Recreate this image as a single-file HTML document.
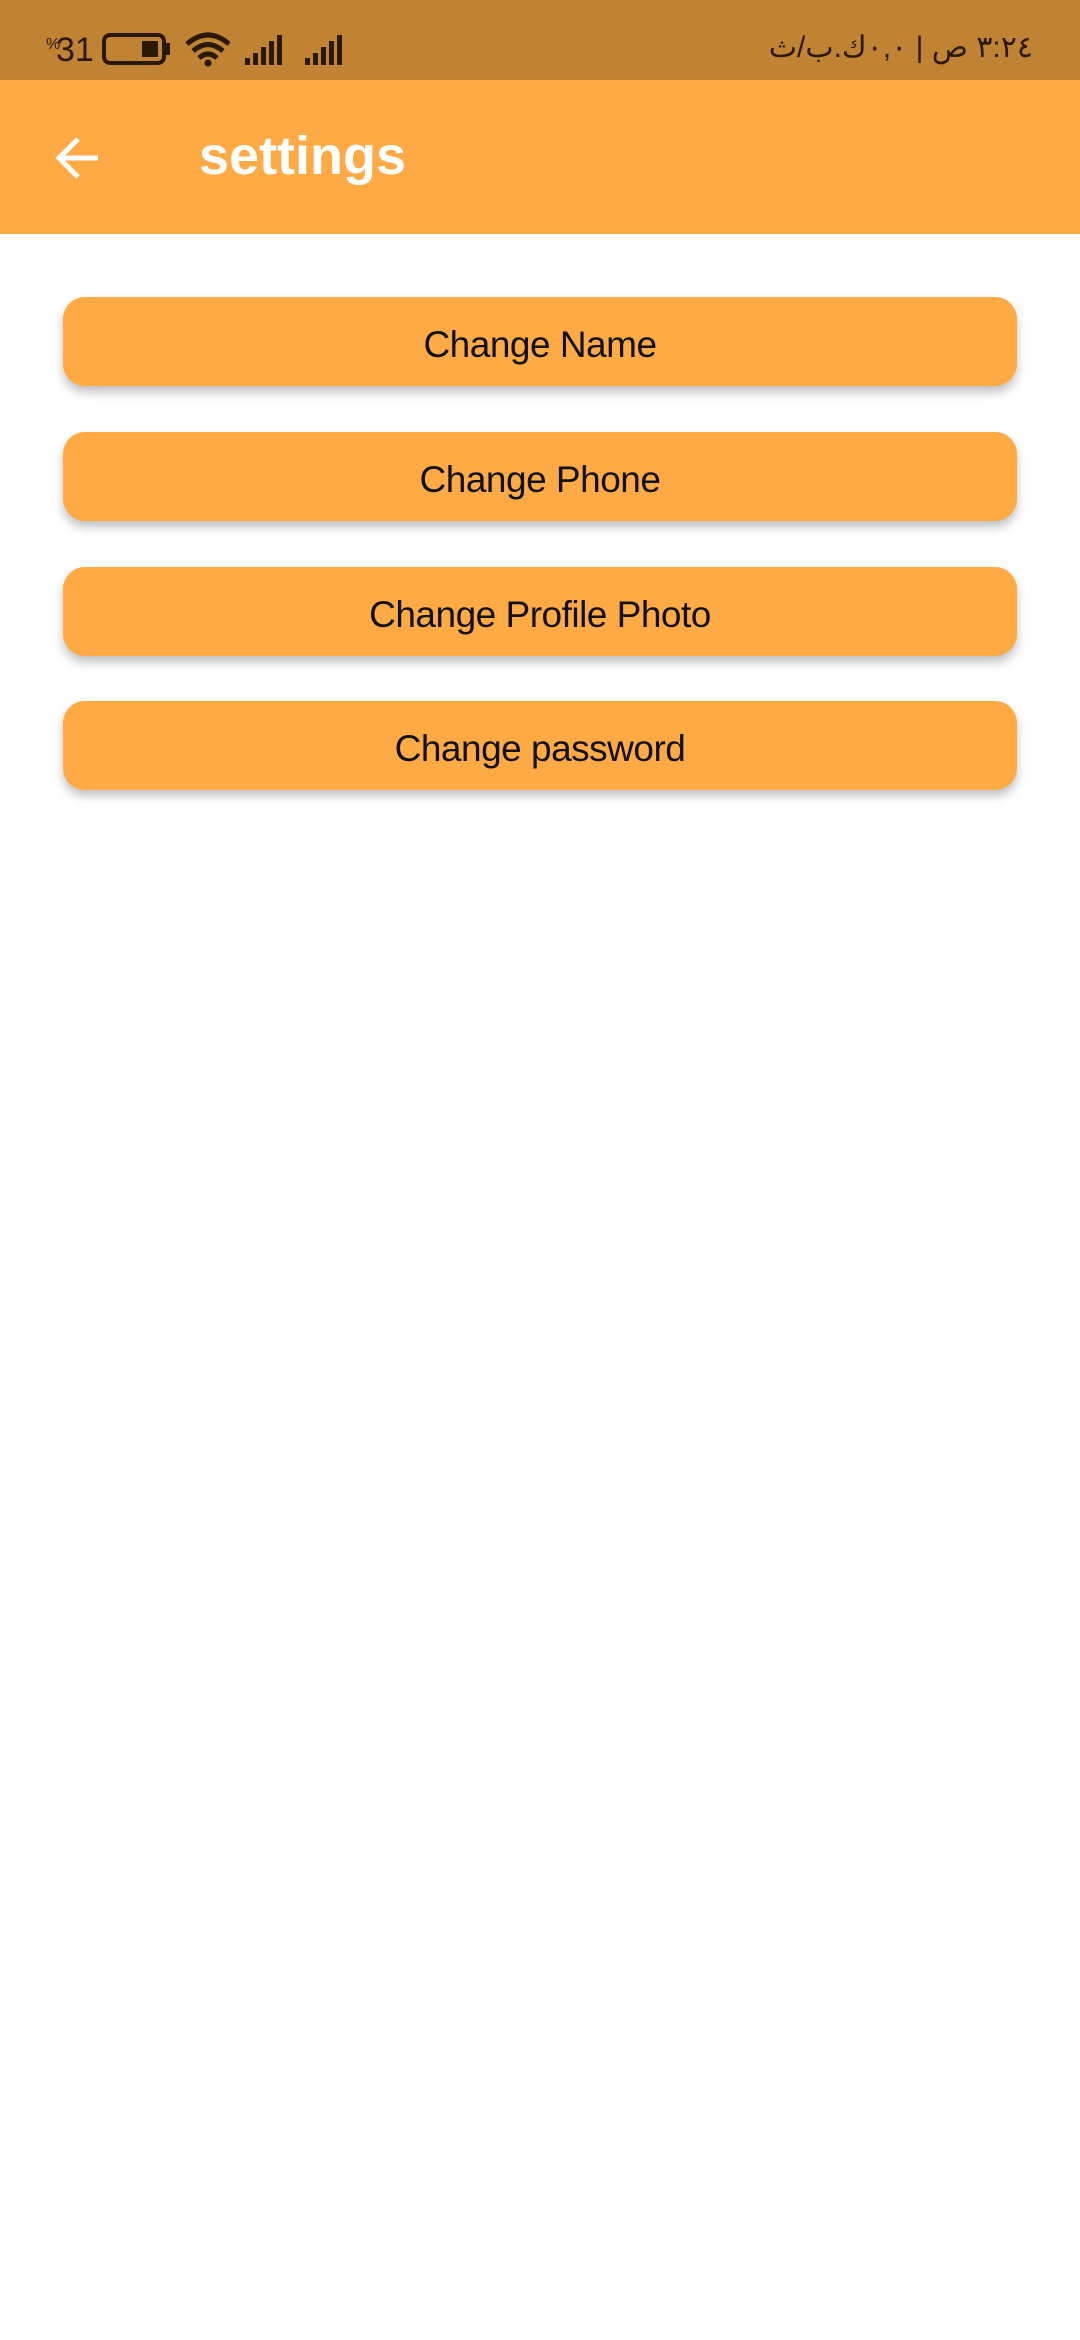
<!DOCTYPE html>
<html><head><meta charset="utf-8"><style>
*{margin:0;padding:0;box-sizing:border-box}
body{width:1080px;height:2340px;background:#fff;font-family:"Liberation Sans","Noto Sans CJK SC",sans-serif;position:relative;overflow:hidden}
.sb{position:absolute;left:0;top:0;width:1080px;height:80px;background:#C08233}
.ab{position:absolute;left:0;top:80px;width:1080px;height:154px;background:#FFAA44}
.title{position:absolute;left:199px;top:124px;font-size:54px;color:#fff;font-weight:bold;line-height:64px}
.btn{position:absolute;left:63px;width:954px;height:89px;background:#FFAA44;border-radius:22px;box-shadow:0 6px 10px rgba(0,0,0,.25);font-size:37px;color:#111;text-align:center;line-height:95px;letter-spacing:-0.5px}
.st{position:absolute;color:#2a1a05;font-size:34px}
</style></head><body>
<div class="sb"></div>
<div class="st" style="left:46px;top:36px;font-size:16px">%</div>
<div class="st" style="left:56px;top:31px">31</div>
<svg style="position:absolute;left:100px;top:32px" width="250" height="36" viewBox="0 0 250 36">
<rect x="4" y="3" width="60" height="28" rx="6" fill="none" stroke="#2a1a05" stroke-width="4"/>
<rect x="42" y="9" width="16" height="16" fill="#2a1a05"/>
<rect x="66" y="11" width="4" height="12" fill="#2a1a05"/>
<path d="M87 12 Q108 -6 129 12" stroke="#2a1a05" stroke-width="5" fill="none"/>
<path d="M93 19 Q108 6 123 19" stroke="#2a1a05" stroke-width="5" fill="none"/>
<path d="M99 26 Q108 18 117 26" stroke="#2a1a05" stroke-width="5" fill="none"/>
<circle cx="108" cy="31" r="3.5" fill="#2a1a05"/>
<g fill="#2a1a05"><rect x="145" y="26" width="5" height="7"/><rect x="153" y="21" width="5" height="12"/><rect x="161" y="15" width="5" height="18"/><rect x="169" y="9" width="5" height="24"/><rect x="177" y="3" width="5" height="30"/>
<rect x="205" y="26" width="5" height="7"/><rect x="213" y="21" width="5" height="12"/><rect x="221" y="15" width="5" height="18"/><rect x="229" y="9" width="5" height="24"/><rect x="237" y="3" width="5" height="30"/></g>
</svg>
<div class="st" style="right:47px;top:30px;font-size:30px;direction:rtl">٣:٢٤ ص | ٠,٠ك.ب/ث</div>
<div class="ab"></div>
<svg style="position:absolute;left:54px;top:134px" width="48" height="48" viewBox="0 0 48 48"><path d="M44 24H6M24 5L5 24L24 43" stroke="#fff" stroke-width="5" fill="none"/></svg>
<div class="title">settings</div>
<div class="btn" style="top:297px">Change Name</div>
<div class="btn" style="top:432px">Change Phone</div>
<div class="btn" style="top:567px">Change Profile Photo</div>
<div class="btn" style="top:701px">Change password</div>
</body></html>
